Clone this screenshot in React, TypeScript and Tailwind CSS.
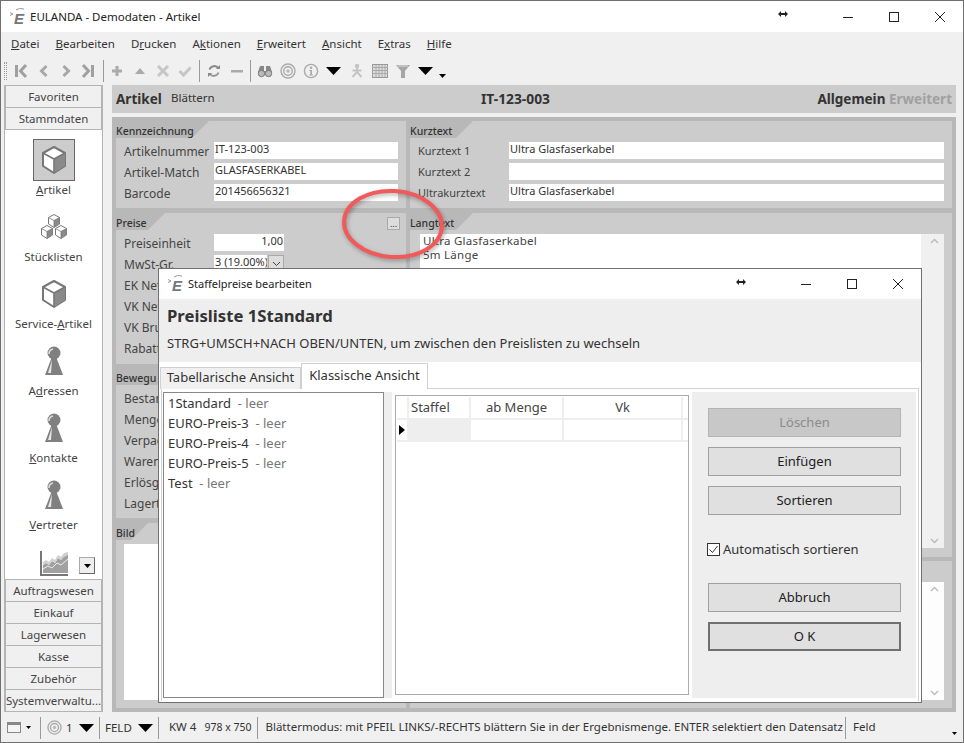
import { ReactNode } from "react";

const Logo = () => (
  <div className="relative w-[24px] h-[22px] shrink-0">
    <svg className="absolute left-0 top-0" width="24" height="22" viewBox="0 0 24 22">
      <path d="M1 6.5 L4 8 L1 9.5 M7 4 Q10 1.5 15 3" fill="none" stroke="#999" strokeWidth="1" />
    </svg>
    <span className="absolute left-[5px] top-[2px] font-['Liberation_Sans',sans-serif] italic font-bold text-[15px] leading-[22px] text-[#777]">
      E
    </span>
  </div>
);

const WindowButtons = ({ arrow }: { arrow: string }) => (
  <>
    <svg className={arrow} width="10" height="6" viewBox="0 0 10 6">
      <path d="M0 3 L3 0 V2 H7 V0 L10 3 L7 6 V4 H3 V6 Z" fill="#222" />
    </svg>
    <svg width="10" height="10" viewBox="0 0 10 10" className="ml-[55px]">
      <path d="M0 5.5 H10" stroke="#222" />
    </svg>
    <svg width="10" height="10" viewBox="0 0 10 10" className="ml-[36px]">
      <rect x="0.5" y="0.5" width="9" height="9" fill="none" stroke="#222" />
    </svg>
    <svg width="10" height="10" viewBox="0 0 10 10" className="ml-[36px]">
      <path d="M0 0 L10 10 M10 0 L0 10" stroke="#222" />
    </svg>
  </>
);

const menu: [string, string, string][] = [
  ["", "D", "atei"],
  ["", "B", "earbeiten"],
  ["D", "r", "ucken"],
  ["A", "k", "tionen"],
  ["", "E", "rweitert"],
  ["", "A", "nsicht"],
  ["E", "x", "tras"],
  ["", "H", "ilfe"],
];

const Tri = ({ w = 15, h = 8, cls = "" }: { w?: number; h?: number; cls?: string }) => (
  <svg className={cls} width={w} height={h} viewBox="0 0 15 8" preserveAspectRatio="none">
    <path d="M0 0 H15 L7.5 8 Z" fill="#000" />
  </svg>
);

const Tool = ({ children, cls = "w-[23px]" }: { children: ReactNode; cls?: string }) => (
  <div className={`${cls} h-[16px] flex items-center justify-center shrink-0`}>
    <svg width="16" height="16" viewBox="0 0 16 16">
      {children}
    </svg>
  </div>
);

const Sep = ({ cls = "mx-[2px]" }: { cls?: string }) => <div className={`w-px h-[22px] bg-[#999] shrink-0 ${cls}`} />;

const Target = ({ size = 16 }: { size?: number }) => (
  <svg width={size} height={size} viewBox="0 0 16 16">
    <circle cx="8" cy="8" r="7" fill="none" stroke="#aaa" strokeWidth="1.4" />
    <circle cx="8" cy="8" r="4.3" fill="none" stroke="#aaa" strokeWidth="1.4" />
    <circle cx="8" cy="8" r="1.8" fill="#bbb" />
  </svg>
);

const Toolbar = () => (
  <div className="h-[29px] flex items-center pl-[3px] text-[#999]">
    <div className="w-[3px] h-[18px] mr-[3px] border-x border-dotted border-[#999]" />
    <Tool cls="w-[22px]">
      <path d="M2 2 H5 V14 H2 Z" fill="#a0a0a0" />
      <path d="M13 2 L7.5 8 L13 14" fill="none" stroke="#a0a0a0" strokeWidth="3" />
    </Tool>
    <Tool>
      <path d="M10.5 3 L5.5 8 L10.5 13" fill="none" stroke="#a8a8a8" strokeWidth="3" />
    </Tool>
    <Tool cls="w-[22px]">
      <path d="M5.5 3 L10.5 8 L5.5 13" fill="none" stroke="#a8a8a8" strokeWidth="3" />
    </Tool>
    <Tool cls="w-[22px]">
      <path d="M11 2 H14 V14 H11 Z" fill="#a0a0a0" />
      <path d="M3 2 L8.5 8 L3 14" fill="none" stroke="#a0a0a0" strokeWidth="3" />
    </Tool>
    <Sep cls="ml-[4px] mr-[1px]" />
    <Tool cls="w-[23px]">
      <path d="M3 6.5 H6.5 V3 H9.5 V6.5 H13 V9.5 H9.5 V13 H6.5 V9.5 H3 Z" fill="#aaa" />
    </Tool>
    <Tool>
      <path d="M3 11 L8 5 L13 11 Z" fill="#aaa" />
    </Tool>
    <Tool>
      <path d="M3 3 L13 13 M13 3 L3 13" stroke="#c6c6c6" strokeWidth="3" />
    </Tool>
    <Tool cls="w-[22px]">
      <path d="M2.5 8 L6.5 12 L13.5 4.5" fill="none" stroke="#c6c6c6" strokeWidth="3" />
    </Tool>
    <Sep cls="ml-[3px] mr-[2px]" />
    <Tool cls="w-[23px]">
      <path d="M12.5 5.5 A5 5 0 0 0 3.5 6.5" fill="none" stroke="#888" strokeWidth="2" />
      <path d="M3.5 10.5 A5 5 0 0 0 12.5 9.5" fill="none" stroke="#999" strokeWidth="2" />
      <path d="M10 6 H14 V2 Z M6 10 H2 V14 Z" fill="#888" />
    </Tool>
    <Tool cls="w-[23px]">
      <path d="M2 7 H14 V9.5 H2 Z" fill="#aaa" />
    </Tool>
    <Sep />
    <Tool cls="w-[23px]">
      <path d="M3 3 H7 V8 H9 V3 H13 L15 9 H1 Z" fill="#888" />
      <circle cx="4.5" cy="10.5" r="3.2" fill="#bbb" stroke="#777" />
      <circle cx="11.5" cy="10.5" r="3.2" fill="#bbb" stroke="#777" />
    </Tool>
    <div className="w-[23px] flex justify-center shrink-0">
      <Target />
    </div>
    <Tool>
      <circle cx="8" cy="8" r="6.6" fill="none" stroke="#aaa" strokeWidth="1.4" />
      <circle cx="8" cy="4.7" r="1.3" fill="#aaa" />
      <path d="M6.3 7 H9 V11.5 H10 V12.5 H6.3 V11.5 H7.3 V8 H6.3 Z" fill="#aaa" />
    </Tool>
    <div className="w-[23px] flex justify-center shrink-0">
      <Tri />
    </div>
    <Tool>
      <circle cx="8" cy="3" r="2.2" fill="#c4c4c4" />
      <path d="M8 5 V9 M3.5 7.5 H12.5 M8 9 L3.5 14 M8 9 L12.5 14" stroke="#c4c4c4" strokeWidth="2" fill="none" />
    </Tool>
    <Tool>
      <rect x="0.5" y="1.5" width="15" height="13" fill="#ddd" stroke="#999" />
      <path d="M0 4.5 H16 M0 7.5 H16 M0 10.5 H16 M4 2 V14 M7 2 V14 M10 2 V14 M13 2 V14" stroke="#aaa" />
    </Tool>
    <Tool>
      <path d="M1 2 H15 L10 8 V15 H6 V8 Z" fill="#a6a6a6" />
      <path d="M3 3 H13" stroke="#ddd" />
    </Tool>
    <div className="w-[23px] flex justify-center shrink-0">
      <Tri />
    </div>
    <Tri w={7} h={4} cls="ml-[2px] mt-[11px]" />
  </div>
);

const Cube = ({ x = 0, y = 0, s = 1 }: { x?: number; y?: number; s?: number }) => (
  <g transform={`translate(${x} ${y}) scale(${s})`}>
    <path d="M12 1 L23 7 V20 L12 27 L1 20 V7 Z" fill="#fff" stroke="#777" strokeWidth="2" strokeLinejoin="round" />
    <path d="M12 13 L23 7 V20 L12 27 Z" fill="#8a8a8a" />
    <path d="M1 7 L12 13 L23 7 M12 13 V27" fill="none" stroke="#777" strokeWidth="1.6" />
  </g>
);

const Pawn = () => (
  <svg width="20" height="30" viewBox="0 0 20 30">
    <circle cx="10" cy="7" r="6.5" fill="#808080" />
    <path d="M7.5 12 H12.5 L19 29 H1 Z" fill="#808080" />
    <path d="M5 8 A5 5 0 0 1 9 3" fill="none" stroke="#ddd" strokeWidth="1.5" />
    <path d="M8 14 L4 27 H7 Z" fill="#e8e8e8" />
  </svg>
);

const SideButton = ({ label }: { label: string }) => (
  <div className="h-[23px] shrink-0 flex items-center justify-center bg-[#f0f0f0] border border-[#b4b4b4] -mb-px last:mb-0 text-[11.5px] text-[#444] whitespace-nowrap overflow-hidden">
    {label}
  </div>
);

const SideItem = ({ pre = "", key1, post, icon, active }: { pre?: string; key1: string; post: string; icon: ReactNode; active?: boolean }) => (
  <div className="h-[67px] shrink-0 flex flex-col items-center">
    <div
      className={`w-[42px] h-[42px] flex items-center justify-center ${active ? "bg-[#ccc] border border-[#666]" : ""}`}
    >
      {icon}
    </div>
    <div className="h-[18px] leading-[18px] text-[11.5px] text-[#444]">
      {pre}
      <span className="underline">{key1}</span>
      {post}
    </div>
  </div>
);

const Sidebar = () => (
  <div className="w-[99px] ml-[3px] shrink-0 flex flex-col border-x border-[#b4b4b4] bg-white">
    <SideButton label="Favoriten" />
    <div className="h-[23px] shrink-0 flex items-center justify-center bg-[#f0f0f0] border border-[#b4b4b4] text-[11.5px] text-[#444]">
      Stammdaten
    </div>
    <div className="flex-1 min-h-0 flex flex-col pt-[9px] overflow-hidden">
      <SideItem
        key1="A"
        post="rtikel"
        active
        icon={
          <svg width="26" height="28" viewBox="0 0 24 28">
            <Cube />
          </svg>
        }
      />
      <SideItem
        key1=""
        post="Stücklisten"
        icon={
          <svg width="26" height="26" viewBox="0 0 26 26">
            <Cube x={7} y={0} s={0.5} />
            <Cube x={0} y={11} s={0.5} />
            <Cube x={14} y={11} s={0.5} />
          </svg>
        }
      />
      <SideItem
        pre="Service-"
        key1="A"
        post="rtikel"
        icon={
          <svg width="26" height="28" viewBox="0 0 24 28">
            <Cube />
          </svg>
        }
      />
      <SideItem pre="A" key1="d" post="ressen" icon={<Pawn />} />
      <SideItem key1="K" post="ontakte" icon={<Pawn />} />
      <SideItem key1="V" post="ertreter" icon={<Pawn />} />
      <div className="flex items-end pl-[35px] gap-[10px] mt-[10px]">
        <svg width="29" height="25" viewBox="0 0 29 25">
          <path d="M3 14 L6 12 L9 14 L12 10 L15 12 L18 7 L21 9 L24 4 L28 3 V22 H3 Z" fill="#a0a0a0" />
          <path d="M3 11 L6 9 L9 11 L12 7 L15 9 L18 4 L21 6 L24 2 L28 1 V4 L24 6 L21 9 L18 7 L15 12 L12 10 L9 14 L6 12 L3 14 Z" fill="#d0d0d0" />
          <path d="M3 18 L8 15 L12 17 L17 12 L21 14 L28 8" fill="none" stroke="#eee" strokeWidth="1" />
          <path d="M1 0 V24 H28" fill="none" stroke="#777" strokeWidth="2" />
        </svg>
        <div className="w-[16px] h-[17px] mb-[2px] bg-[#eee] border border-[#aaa] border-r-[#666] border-b-[#666] flex items-center justify-center">
          <Tri w={7} h={4} />
        </div>
      </div>
    </div>
    <SideButton label="Auftragswesen" />
    <SideButton label="Einkauf" />
    <SideButton label="Lagerwesen" />
    <SideButton label="Kasse" />
    <SideButton label="Zubehör" />
    <SideButton label="Systemverwaltu..." />
  </div>
);

const Group = ({ title, w, cls, children }: { title: string; w: string; cls: string; children: ReactNode }) => (
  <div className={`${cls} flex flex-col bg-[#ccc]`}>
    <div className="h-[17px] shrink-0 bg-[#ccc]">
      <div
        className={`${w} h-[17px] bg-[#b8b8b8] [clip-path:polygon(0_0,100%_0,calc(100%-17px)_100%,0_100%)] text-[10.5px] leading-[20px] font-medium text-[#333] whitespace-nowrap`}
      >
        {title}
      </div>
    </div>
    {children}
  </div>
);

const Row = ({ label, value, lw = "w-[90px]", fw = "w-[184px]", right, narrow }: { label: string; value?: string; lw?: string; fw?: string; right?: boolean; narrow?: boolean }) => (
  <div className="h-[21px] flex items-center">
    <div className={`${lw} shrink-0 pt-[2px] text-[#444] whitespace-nowrap ${narrow ? "text-[11px]" : "text-[12px]"}`}>
      {label}
    </div>
    {value !== undefined && (
      <div
        className={`${fw} h-[17px] bg-white px-px text-[11px] leading-[14px] text-[#333] whitespace-nowrap overflow-hidden ${right ? "text-right" : ""}`}
      >
        {value}
      </div>
    )}
  </div>
);

const Scroll = ({ cls }: { cls: string }) => (
  <div className={`${cls} w-[23px] shrink-0 flex flex-col justify-between items-center pl-[3px] py-[4px]`}>
    <svg width="9" height="6" viewBox="0 0 9 6">
      <path d="M1 5 L4.5 1.5 L8 5" fill="none" stroke="#bbb" strokeWidth="1.4" />
    </svg>
    <svg width="9" height="6" viewBox="0 0 9 6">
      <path d="M1 1 L4.5 4.5 L8 1" fill="none" stroke="#bbb" strokeWidth="1.4" />
    </svg>
  </div>
);

const Main = () => (
  <div className="w-[844px] ml-[9px] shrink-0 flex flex-col gap-[4px]">
    <div className="h-[28px] shrink-0 bg-[#ccc] flex items-center pl-[4px] pr-[4px] text-[#333]">
      <div className="w-[55px] font-bold text-[13.5px]">Artikel</div>
      <div className="w-[310px] text-[11.5px] -mt-[3px]">Blättern</div>
      <div className="font-bold text-[13.8px]">IT-123-003</div>
      <div className="ml-auto font-bold text-[13.5px]">
        Allgemein <span className="text-[#a0a0a0]">Erweitert</span>
      </div>
    </div>
    <div className="flex-1 min-h-0 bg-[#b8b8b8] p-[4px] flex gap-[4px]">
      <div className="w-[290px] shrink-0 flex flex-col">
        <Group title="Kennzeichnung" w="w-[93px]" cls="h-[87px] mb-[5px]">
          <div className="pl-[8px] pt-[2px] flex flex-col">
            <Row label="Artikelnummer" value="IT-123-003" />
            <Row label="Artikel-Match" value="GLASFASERKABEL" />
            <Row label="Barcode" value="201456656321" />
          </div>
        </Group>
        <Group title="Preise" w="w-[49px]" cls="h-[151px] mb-[4px] relative">
          <div className="absolute right-[6px] top-[4px] w-[13px] h-[13px] bg-[#ddd] border border-[#aaa] text-[9px] leading-[12px] text-center text-[#333]">
            ...
          </div>
          <div className="pl-[8px] pt-[2px] flex flex-col">
            <Row label="Preiseinheit" value="1,00" fw="w-[70px]" right />
            <div className="h-[21px] flex items-center">
              <div className="w-[90px] pt-[2px] text-[12px] text-[#444]">MwSt-Gr.</div>
              <div className="w-[53px] h-[17px] bg-white px-px text-[11px] leading-[14px] text-[#333] whitespace-nowrap overflow-hidden">
                3 (19.00%)
              </div>
              <div className="w-[16px] h-[17px] ml-px bg-[#ddd] border border-[#aaa] flex items-center justify-center">
                <svg width="9" height="6" viewBox="0 0 9 6">
                  <path d="M1 1 L4.5 4.5 L8 1" fill="none" stroke="#444" />
                </svg>
              </div>
            </div>
            <Row label="EK Net" />
            <Row label="VK Net" />
            <Row label="VK Bru" />
            <Row label="Rabatt" />
          </div>
        </Group>
        <Group title="Bewegu" w="w-[80px]" cls="h-[150px] mb-[5px]">
          <div className="pl-[8px] pt-[2px] flex flex-col">
            <Row label="Bestan" />
            <Row label="Menge" />
            <Row label="Verpac" />
            <Row label="Waren" />
            <Row label="Erlösg" />
            <Row label="Lagert" />
          </div>
        </Group>
        <Group title="Bild" w="w-[32px]" cls="flex-1 min-h-0">
          <div className="flex-1 ml-[8px] mr-[8px] mt-[4px] mb-[8px] bg-white" />
        </Group>
      </div>
      <div className="flex-1 min-w-0 flex flex-col">
        <Group title="Kurztext" w="w-[63px]" cls="h-[87px] mb-[5px]">
          <div className="pl-[8px] pt-[2px] flex flex-col">
            <Row label="Kurztext 1" value="Ultra Glasfaserkabel" lw="w-[91px]" fw="w-[435px]" narrow />
            <Row label="Kurztext 2" value="" lw="w-[91px]" fw="w-[435px]" narrow />
            <Row label="Ultrakurztext" value="Ultra Glasfaserkabel" lw="w-[91px]" fw="w-[435px]" narrow />
          </div>
        </Group>
        <Group title="Langtext" w="w-[63px]" cls="h-[344px] mb-[4px]">
          <div className="flex-1 min-h-0 ml-[10px] mr-[8px] mt-[4px] mb-[9px] flex bg-white">
            <div className="flex-1 pl-[3px] text-[11.5px] tracking-[0.25px] leading-[14px] text-[#444]">
              Ultra Glasfaserkabel
              <br />
              5m Länge
            </div>
            <Scroll cls="bg-[#f0f0f0]" />
          </div>
        </Group>
        <Group title="" w="w-[63px]" cls="flex-1 min-h-0">
          <div className="flex-1 min-h-0 ml-[10px] mr-[8px] mt-[4px] mb-[8px] flex justify-end bg-white">
            <Scroll cls="bg-[#fdfdfd]" />
          </div>
        </Group>
      </div>
    </div>
  </div>
);

const StatusBar = () => (
  <div className="h-[29px] shrink-0 flex items-center pl-[6px] text-[11.5px] text-[#333] whitespace-nowrap relative">
    <div className="w-[14px] h-[11px] bg-[#f4f4f4] border border-[#888] border-t-[3px] shrink-0" />
    <Tri w={5} h={3} cls="ml-[5px] mr-[9px]" />
    <div className="w-px h-[22px] bg-[#999] shrink-0" />
    <div className="ml-[6px]">
      <Target size={15} />
    </div>
    <span className="ml-[4px] w-[13px]">1</span>
    <Tri />
    <div className="w-px h-[22px] bg-[#999] shrink-0 ml-[5px]" />
    <span className="ml-[5px] w-[33px]">FELD</span>
    <Tri />
    <div className="w-px h-[22px] bg-[#999] shrink-0 ml-[5px]" />
    <span className="ml-[10px] -mt-[2px]">KW 4</span>
    <span className="ml-[8px] text-[10.5px]">978 x 750</span>
    <div className="w-px h-[22px] bg-[#999] shrink-0 ml-[6px]" />
    <span className="ml-[7px] -mt-[2px]">
      Blättermodus: mit PFEIL LINKS/-RECHTS blättern Sie in der Ergebnismenge. ENTER selektiert den Datensatz
    </span>
    <div className="absolute left-[844px] w-px h-[22px] bg-[#999]" />
    <span className="absolute left-[852px] -mt-[2px]">Feld</span>
    <Tri w={5} h={3} cls="absolute left-[951px] top-[19px]" />
  </div>
);

const DlgButton = ({ label, cls = "border border-[#a0a0a0] bg-[#e0e0e0] text-[#222]" }: { label: string; cls?: string }) => (
  <div className={`w-[193px] h-[29px] shrink-0 flex items-center justify-center text-[13px] ${cls}`}>{label}</div>
);

const prices: [string, string][] = [
  ["1Standard", "- leer"],
  ["EURO-Preis-3", "- leer"],
  ["EURO-Preis-4", "- leer"],
  ["EURO-Preis-5", "- leer"],
  ["Test", "- leer"],
];

const Dialog = () => (
  <div className="absolute left-[157px] top-[267px] w-[764px] h-[435px] bg-white border border-[#707070] flex flex-col text-[#333] text-[13px]">
    <div className="h-[30px] shrink-0 flex items-center pl-[8px]">
      <Logo />
      <span className="ml-[-3px] text-[11px] text-[#222]">Staffelpreise bearbeiten</span>
      <div className="ml-auto flex items-center pr-[18px]">
        <WindowButtons arrow="-mt-[4px]" />
      </div>
    </div>
    <div className="h-[63px] shrink-0 bg-[#eee] pl-[8px] flex flex-col">
      <div className="h-[34px] flex items-center font-bold text-[16.7px] text-[#333]">Preisliste 1Standard</div>
      <div className="h-[22px] flex items-center text-[13px]">
        STRG+UMSCH+NACH OBEN/UNTEN, um zwischen den Preislisten zu wechseln
      </div>
    </div>
    <div className="h-[27px] shrink-0 flex items-end pl-[1px] relative z-10 -mb-px">
      <div className="w-[141px] h-[22px] bg-[#f0f0f0] border border-b-0 border-[#d0d0d0] flex items-center justify-center pb-px">
        Tabellarische Ansicht
      </div>
      <div className="w-[127px] h-[26px] bg-white border border-b-0 border-[#d0d0d0] flex items-center justify-center -mt-[2px] pb-[2px]">
        Klassische Ansicht
      </div>
    </div>
    <div className="flex-1 min-h-0 ml-[2px] mr-[2px] mb-[1px] border border-[#d0d0d0] border-b-0 pl-[1px] pt-[3px] pr-[2px] pb-[3px] flex">
      <div className="w-[229px] shrink-0 bg-[#eee] pr-[8px]">
        <div className="h-full bg-white border border-[#888] pl-[4px]">
          {prices.map(([name, note]) => (
            <div key={name} className="h-[20px] leading-[20px] whitespace-pre">
              {name} <span className="text-[#777]"> {note}</span>
            </div>
          ))}
        </div>
      </div>
      <div className="w-[294px] shrink-0 mx-[3px] mt-[3px] mb-[3px] border border-[#aaa] pl-[1px] pt-px">
        <div className="flex h-[23px] border-b-2 border-[#eee] text-[#444]">
          <div className="w-[12px] border-r-2 border-[#eee]" />
          <div className="w-[62px] border-r-2 border-[#eee] flex items-center pl-[2px] pt-px">Staffel</div>
          <div className="w-[93px] border-r-2 border-[#eee] flex items-center justify-center pt-px">ab Menge</div>
          <div className="w-[119px] border-r-2 border-[#eee] flex items-center justify-center pt-px">Vk</div>
        </div>
        <div className="flex h-[22px] border-b-2 border-[#eee]">
          <div className="w-[12px] border-r-2 border-[#eee] flex items-center justify-center">
            <svg width="6" height="10" viewBox="0 0 6 10">
              <path d="M0 0 L6 5 L0 10 Z" fill="#000" />
            </svg>
          </div>
          <div className="w-[62px] bg-[#eee]" />
          <div className="w-[93px] border-r-2 border-[#eee]" />
          <div className="w-[119px] border-r-2 border-[#eee]" />
        </div>
      </div>
      <div className="flex-1 min-w-0 bg-[#eee] pl-[16px] pt-[16px] flex flex-col">
        <DlgButton label="Löschen" cls="border border-[#b4b4b4] bg-[#c8c8c8] text-[#8c8c8c]" />
        <div className="h-[10px] shrink-0" />
        <DlgButton label="Einfügen" />
        <div className="h-[10px] shrink-0" />
        <DlgButton label="Sortieren" />
        <div className="h-[24px] shrink-0" />
        <div className="h-[20px] shrink-0 flex items-center pt-px -ml-px">
          <div className="w-[13px] h-[13px] bg-white border border-[#333] flex items-center justify-center">
            <svg width="11" height="11" viewBox="0 0 11 11">
              <path d="M1.5 5.5 L4.5 8.5 L9.5 2" fill="none" stroke="#333" />
            </svg>
          </div>
          <span className="ml-[3px]">Automatisch sortieren</span>
        </div>
        <div className="h-[24px] shrink-0" />
        <DlgButton label="Abbruch" />
        <div className="h-[10px] shrink-0" />
        <DlgButton label="O K" cls="border-2 border-[#707070] bg-[#e0e0e0] text-[#222]" />
      </div>
    </div>
  </div>
);

export default function App() {
  return (
    <div className="relative w-[964px] h-[743px] overflow-hidden bg-[#f0f0f0] border border-[#707070] flex flex-col font-['Noto_Sans',sans-serif]">
      <div className="h-[31px] shrink-0 bg-white flex items-center pl-[8px]">
        <Logo />
        <span className="ml-[-3px] text-[11.5px] text-[#222]">EULANDA - Demodaten - Artikel</span>
        <div className="ml-auto flex items-center pr-[18px]">
          <WindowButtons arrow="-mt-[6px]" />
        </div>
      </div>
      <div className="h-[24px] shrink-0 flex items-center pl-[10px] gap-[16px] text-[11.5px] text-[#333]">
        {menu.map(([a, b, c]) => (
          <div key={a + b + c}>
            {a}
            <span className="underline">{b}</span>
            {c}
          </div>
        ))}
      </div>
      <Toolbar />
      <div className="flex-1 min-h-0 flex pb-px">
        <Sidebar />
        <Main />
      </div>
      <StatusBar />
      <Dialog />
      <svg className="absolute left-[334px] top-[180px] drop-shadow-[1px_2px_2px_rgba(0,0,0,0.3)]" width="116" height="86" viewBox="0 0 116 86">
        <ellipse cx="58" cy="43" rx="49" ry="33" fill="none" stroke="#f15a5a" strokeWidth="4" transform="rotate(4 58 43)" />
      </svg>
    </div>
  );
}
